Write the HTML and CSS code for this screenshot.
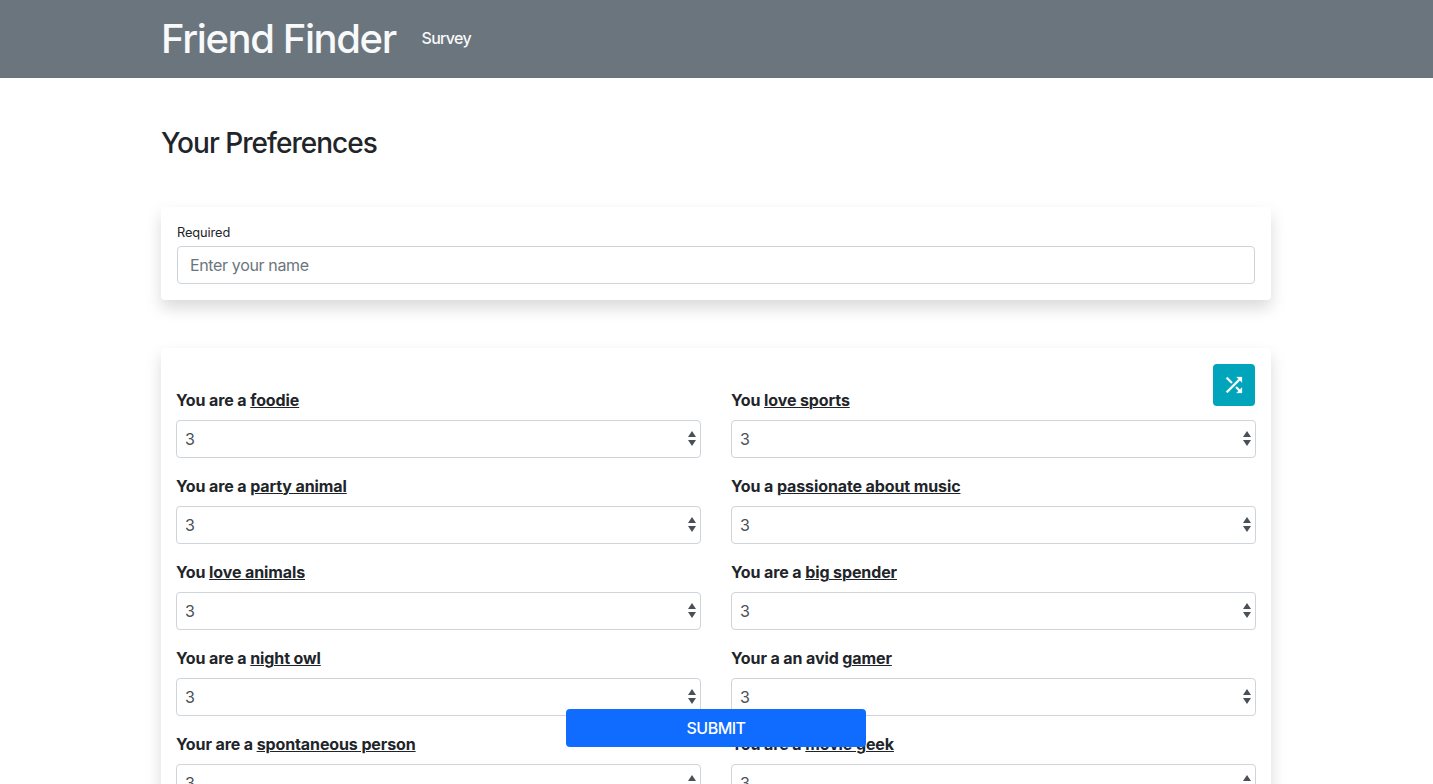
FILE: index.html
```html
<!DOCTYPE html>
<html lang="en">
<head>
<meta charset="utf-8">
<title>Friend Finder</title>
<link rel="stylesheet" href="styles.css">
</head>
<body>
<header class="navbar">
  <div class="container navbar-inner">
    <h1 class="brand">Friend Finder</h1>
    <a class="nav-link">Survey</a>
  </div>
</header>
<main class="container">
  <h3 class="page-title">Your Preferences</h3>
  <section class="card name-card">
    <small class="hint">Required</small>
    <input class="name-input" type="text" placeholder="Enter your name">
  </section>
  <section class="card survey-card">
    <button class="shuffle" type="button" aria-label="Shuffle">
      <svg width="24" height="24" viewBox="0 0 24 24" fill="#fff" stroke="#fff" stroke-width=".25"><path d="M10.59 9.17L5.41 4 4 5.41l5.17 5.17 1.42-1.41zM14.5 4l2.04 2.04L4 18.59 5.41 20 17.96 7.46 20 9.5V4h-5.5zm.33 9.41l-1.41 1.41 3.13 3.13L14.5 20H20v-5.5l-2.04 2.04-3.13-3.13z"/></svg>
    </button>
    <div class="questions">
      <div class="question"><label class="label">You are a <u>foodie</u></label><div class="select"><span>3</span><svg class="caret" width="8" height="15" viewBox="0 0 8 15"><path d="M4 0L8 6H0zM4 15L0 9h8z"/></svg></div></div>
      <div class="question"><label class="label">You <u>love sports</u></label><div class="select"><span>3</span><svg class="caret" width="8" height="15" viewBox="0 0 8 15"><path d="M4 0L8 6H0zM4 15L0 9h8z"/></svg></div></div>
      <div class="question"><label class="label">You are a <u>party animal</u></label><div class="select"><span>3</span><svg class="caret" width="8" height="15" viewBox="0 0 8 15"><path d="M4 0L8 6H0zM4 15L0 9h8z"/></svg></div></div>
      <div class="question"><label class="label">You a <u>passionate about music</u></label><div class="select"><span>3</span><svg class="caret" width="8" height="15" viewBox="0 0 8 15"><path d="M4 0L8 6H0zM4 15L0 9h8z"/></svg></div></div>
      <div class="question"><label class="label">You <u>love animals</u></label><div class="select"><span>3</span><svg class="caret" width="8" height="15" viewBox="0 0 8 15"><path d="M4 0L8 6H0zM4 15L0 9h8z"/></svg></div></div>
      <div class="question"><label class="label">You are a <u>big spender</u></label><div class="select"><span>3</span><svg class="caret" width="8" height="15" viewBox="0 0 8 15"><path d="M4 0L8 6H0zM4 15L0 9h8z"/></svg></div></div>
      <div class="question"><label class="label">You are a <u>night owl</u></label><div class="select"><span>3</span><svg class="caret" width="8" height="15" viewBox="0 0 8 15"><path d="M4 0L8 6H0zM4 15L0 9h8z"/></svg></div></div>
      <div class="question"><label class="label">Your a an avid <u>gamer</u></label><div class="select"><span>3</span><svg class="caret" width="8" height="15" viewBox="0 0 8 15"><path d="M4 0L8 6H0zM4 15L0 9h8z"/></svg></div></div>
      <div class="question"><label class="label">Your are a <u>spontaneous person</u></label><div class="select"><span>3</span><svg class="caret" width="8" height="15" viewBox="0 0 8 15"><path d="M4 0L8 6H0zM4 15L0 9h8z"/></svg></div></div>
      <div class="question"><label class="label">You are a <u>movie geek</u></label><div class="select"><span>3</span><svg class="caret" width="8" height="15" viewBox="0 0 8 15"><path d="M4 0L8 6H0zM4 15L0 9h8z"/></svg></div></div>
    </div>
  </section>
</main>
<button class="submit" type="button">SUBMIT</button>
</body>
</html>
```
FILE: styles.css
```css
* { box-sizing: border-box; }
body {
  margin: 0;
  height: 784px;
  overflow: hidden;
  background: #fff;
  color: #212529;
  font: 400 16px/24px Inter, "Liberation Sans", sans-serif;
}
.container { width: 1110px; margin: 0 auto; position: relative; left: -0.5px; }
.navbar { height: 78px; background: #6b757d; }
.navbar-inner { height: 78px; display: flex; align-items: center; }
.brand { margin: 0; font-size: 40px; line-height: 48px; font-weight: 550; letter-spacing: -1.4px; color: #f8f9fa; width: 260.5px; white-space: nowrap; }
.nav-link { color: #f8f9fa; font-weight: 500; letter-spacing: -0.7px; padding-bottom: 2px; }
.page-title { margin: 0; padding: 49px 0 47px; font-size: 28px; line-height: 33px; font-weight: 500; letter-spacing: -0.97px; }
.card { background: #fff; border-radius: 4px; box-shadow: 0 8px 16px rgba(0, 0, 0, .15); }
.name-card { height: 93px; padding: 16px; }
.hint { display: block; font-size: 12.8px; line-height: 19px; margin-bottom: 4px; letter-spacing: -0.1px; }
.name-input {
  display: block; width: 100%; height: 38px; padding: 6px 12px;
  border: 1px solid #ced4da; border-radius: 4px; background: #fff;
  font: inherit; letter-spacing: -0.36px; color: #495057;
}
.name-input::placeholder { color: #6c757d; opacity: 1; }
.survey-card { position: relative; margin-top: 48px; height: 500px; padding: 40px 15px 0; }
.shuffle {
  position: absolute; top: 16px; right: 16px; width: 42px; height: 42px;
  display: flex; align-items: center; justify-content: center;
  padding: 0; border: 0; border-radius: 4px; background: #00a5bb;
}
.questions { display: grid; grid-template-columns: 525px 525px; column-gap: 30px; row-gap: 16px; }
.label { display: block; height: 24px; margin-bottom: 8px; font-weight: 700; letter-spacing: -0.11px; white-space: nowrap; }
.label u { text-underline-offset: 1px; text-decoration-thickness: 1px; }
.select {
  display: flex; align-items: center; justify-content: space-between; height: 38px;
  padding: 0 4px 0 8px; border: 1px solid #ced4da; border-radius: 4px; color: #495057;
}
.caret { fill: #495057; margin-bottom: 1px; }
.submit {
  position: fixed; left: 566px; top: 709px; width: 300px; height: 38px;
  padding: 0; border: 0; border-radius: 4px; background: #106cff; color: #fff;
  font: 450 16px/24px Inter, "Liberation Sans", sans-serif; letter-spacing: -0.5px;
}
```
